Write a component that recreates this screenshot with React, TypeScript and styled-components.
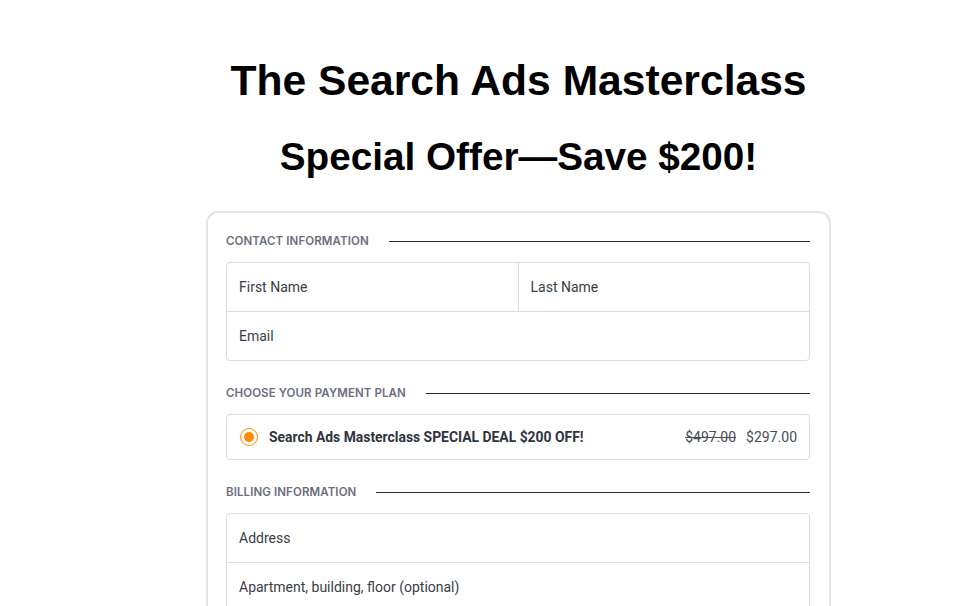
import styled, { createGlobalStyle } from 'styled-components';

const GlobalStyle = createGlobalStyle`
  html, body {
    margin: 0;
    padding: 0;
    background: #ffffff;
  }
  body {
    font-family: Roboto, "Liberation Sans", Arial, sans-serif;
  }
`;

const Page = styled.div`
  padding-left: 60px;
  height: 606px;
  overflow: hidden;
`;

const Column = styled.div`
  width: 625px;
  margin: 0 auto;
  display: flex;
  flex-direction: column;
  align-items: stretch;
`;

const Title = styled.h1<{ $size: number; $top: number }>`
  margin: ${(p) => p.$top}px -100px 0;
  font-family: "Liberation Sans", Arial, sans-serif;
  font-weight: 700;
  font-size: ${(p) => p.$size}px;
  line-height: 1.15;
  color: #000;
  text-align: center;
  white-space: nowrap;
`;

const Card = styled.div`
  margin-top: 32px;
  border: 2px solid #e2e5e5;
  border-radius: 12px;
  padding: 18px 19px 40px 18px;
`;

const Section = styled.div`
  & + & {
    margin-top: 22px;
  }
`;

const SectionHead = styled.div`
  display: flex;
  align-items: center;
  gap: 20px;
  height: 20px;
  margin-bottom: 11px;
`;

const SectionLabel = styled.span`
  font-family: Inter, "Open Sans", sans-serif;
  font-weight: 600;
  font-size: 11.5px;
  letter-spacing: 0.1px;
  color: #6b6e7e;
  text-transform: uppercase;
  white-space: nowrap;
`;

const Rule = styled.div`
  flex: 1;
  height: 1px;
  background: #2b2b2b;
`;

const FieldGroup = styled.div`
  border: 1px solid #dcdcdc;
  border-radius: 4px;
  background: #fff;
`;

const FieldRow = styled.div`
  display: flex;
  & + & {
    border-top: 1px solid #dcdcdc;
  }
`;

const Field = styled.div`
  flex: 1;
  height: 48px;
  display: flex;
  align-items: center;
  padding-left: 12px;
  font-size: 14px;
  color: #3a3d45;
  & + & {
    border-left: 1px solid #dcdcdc;
  }
`;

const PlanBox = styled.div`
  display: flex;
  align-items: center;
  height: 44px;
  padding: 0 12px 0 13px;
  border: 1px solid #dcdcdc;
  border-radius: 4px;
`;

const Radio = styled.span`
  box-sizing: border-box;
  width: 18px;
  height: 18px;
  border-radius: 50%;
  border: 1.5px solid #ff8a00;
  display: flex;
  align-items: center;
  justify-content: center;
  margin-right: 11px;
  &::after {
    content: '';
    width: 10px;
    height: 10px;
    border-radius: 50%;
    background: #ff8a00;
  }
`;

const PlanName = styled.span`
  flex: 1;
  font-size: 13.9px;
  font-weight: 700;
  color: #2f3440;
`;

const Price = styled.span<{ $old?: boolean }>`
  font-size: 14px;
  color: #4a4d55;
  text-decoration: ${(p) => (p.$old ? 'line-through' : 'none')};
  & + & {
    margin-left: 10px;
  }
`;

export default function App() {
  return (
    <Page>
      <GlobalStyle />
      <Column>
        <Title $size={42.6} $top={56}>The Search Ads Masterclass</Title>
        <Title $size={38.7} $top={30}>Special Offer—Save $200!</Title>
        <Card>
          <Section>
            <SectionHead>
              <SectionLabel>Contact Information</SectionLabel>
              <Rule />
            </SectionHead>
            <FieldGroup>
              <FieldRow>
                <Field>First Name</Field>
                <Field>Last Name</Field>
              </FieldRow>
              <FieldRow>
                <Field>Email</Field>
              </FieldRow>
            </FieldGroup>
          </Section>
          <Section>
            <SectionHead>
              <SectionLabel>Choose your payment plan</SectionLabel>
              <Rule />
            </SectionHead>
            <PlanBox>
              <Radio />
              <PlanName>Search Ads Masterclass SPECIAL DEAL $200 OFF!</PlanName>
              <Price $old>$497.00</Price>
              <Price>$297.00</Price>
            </PlanBox>
          </Section>
          <Section>
            <SectionHead>
              <SectionLabel>Billing Information</SectionLabel>
              <Rule />
            </SectionHead>
            <FieldGroup>
              <FieldRow>
                <Field>Address</Field>
              </FieldRow>
              <FieldRow>
                <Field>Apartment, building, floor (optional)</Field>
              </FieldRow>
            </FieldGroup>
          </Section>
        </Card>
      </Column>
    </Page>
  );
}
